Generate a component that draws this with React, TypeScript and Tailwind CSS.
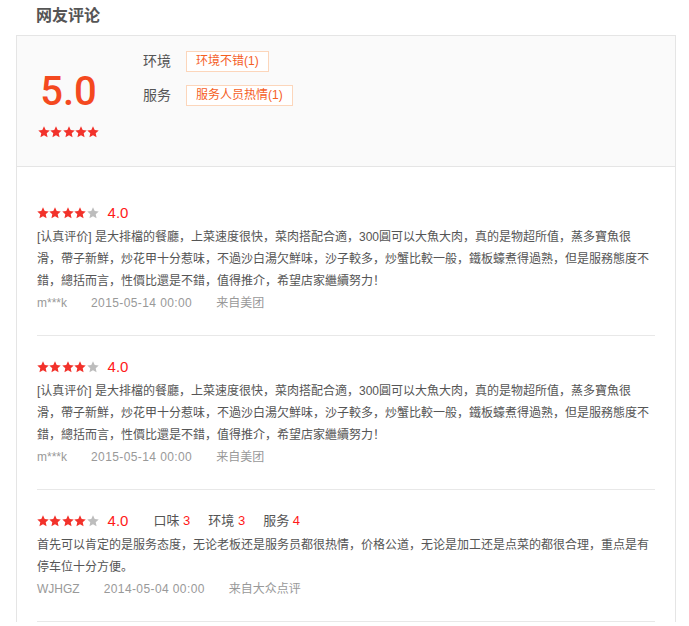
import React from 'react';

// Avis des internautes : résumé + liste des commentaires
const STAR_PATH = 'M12 1.8l3.05 6.6 7.15.8-5.35 4.9 1.5 7.1L12 17.6l-6.35 3.6 1.5-7.1L1.8 9.2l7.15-.8z';

function Stars({ count }: { count: number }) {
  return (
    <div className="flex items-center gap-[0.4px]">
      {[0, 1, 2, 3, 4].map((i) => (
        <svg key={i} viewBox="1.3 1.3 21.4 21.4" className="w-[12px] h-[12px]">
          <path d={STAR_PATH} fill={i < count ? '#f2322b' : '#bdbdbd'} />
        </svg>
      ))}
    </div>
  );
}

const LONG_TEXT =
  '[认真评价] 是大排檔的餐廳，上菜速度很快，菜肉搭配合適，300圓可以大魚大肉，真的是物超所值，蒸多寶魚很滑，帶子新鮮，炒花甲十分惹味，不過沙白湯欠鮮味，沙子較多，炒蟹比較一般，鐵板蠔煮得過熟，但是服務態度不錯，總括而言，性價比還是不錯，值得推介，希望店家繼續努力！';

const reviews = [
  { id: 1, stars: 4, score: '4.0', text: LONG_TEXT, user: 'm***k', date: '2015-05-14 00:00', source: '来自美团', details: null },
  { id: 2, stars: 4, score: '4.0', text: LONG_TEXT, user: 'm***k', date: '2015-05-14 00:00', source: '来自美团', details: null },
  {
    id: 3,
    stars: 4,
    score: '4.0',
    text: '首先可以肯定的是服务态度，无论老板还是服务员都很热情，价格公道，无论是加工还是点菜的都很合理，重点是有停车位十分方便。',
    user: 'WJHGZ',
    date: '2014-05-04 00:00',
    source: '来自大众点评',
    details: [
      { label: '口味', value: 3 },
      { label: '环境', value: 3 },
      { label: '服务', value: 4 },
    ],
  },
];

const tags = [
  { label: '环境', tag: '环境不错(1)' },
  { label: '服务', tag: '服务人员热情(1)' },
];

export default function App() {
  return (
    <div className="w-[689px] h-[626px] overflow-hidden bg-white font-['Liberation_Sans','Noto_Sans_CJK_SC',sans-serif]">
      {/* ── Titre ── */}
      <div className="h-[35px] pl-[36px] pt-[6px]">
        <h2 className="text-[16px] leading-[20px] font-bold text-[#555555]">网友评论</h2>
      </div>

      <div className="ml-[16px] w-[660px] border-x border-t border-[#e5e5e5]">
        {/* ── Résumé ── */}
        <div className="h-[131px] bg-[#fafafa] border-b border-[#e5e5e5] flex">
          <div className="pl-[20px] pt-[36px] w-[83px] flex flex-col items-center">
            <div className="w-[63px] text-center text-[40px] leading-[40px] font-medium text-[#f4491f] font-['Roboto',sans-serif]">
              5.0
            </div>
            <div className="mt-[14px]">
              <Stars count={5} />
            </div>
          </div>

          <div className="ml-[43px] pt-[15px] flex flex-col gap-[13px]">
            {tags.map((t) => (
              <div key={t.label} className="flex items-center h-[21px]">
                <span className="w-[43px] text-[14px] text-[#555555]">{t.label}</span>
                <span className="h-[21px] px-[9px] border border-[#fcd6bb] bg-white text-[12px] leading-[19px] text-[#f5601f]">
                  {t.tag}
                </span>
              </div>
            ))}
          </div>
        </div>

        {/* ── Liste des avis ── */}
        <div className="px-[20px] pt-[15px]">
          {reviews.map((r) => (
            <div key={r.id} className="pt-[18px] pb-[21px] border-b border-[#e8e8e8]">
              <div className="h-[26px] flex items-center">
                <Stars count={r.stars} />
                <span className="ml-[9px] text-[15px] text-[#ff1a1a]">{r.score}</span>
                {r.details && (
                  <div className="ml-[25px] flex items-center gap-[18px]">
                    {r.details.map((d) => (
                      <span key={d.label} className="text-[13px] text-[#555555]">
                        {d.label} <span className="text-[#ff1a1a]">{d.value}</span>
                      </span>
                    ))}
                  </div>
                )}
              </div>
              <p className="w-[614px] text-[12px] leading-[22px] text-[#555555]">{r.text}</p>
              <div className="flex text-[12px] leading-[22px] text-[#999999]">
                <span className="mr-[24px]">{r.user}</span>
                <span className="mr-[24px] tracking-[0.4px]">{r.date}</span>
                <span>{r.source}</span>
              </div>
            </div>
          ))}
        </div>
      </div>
    </div>
  );
}
